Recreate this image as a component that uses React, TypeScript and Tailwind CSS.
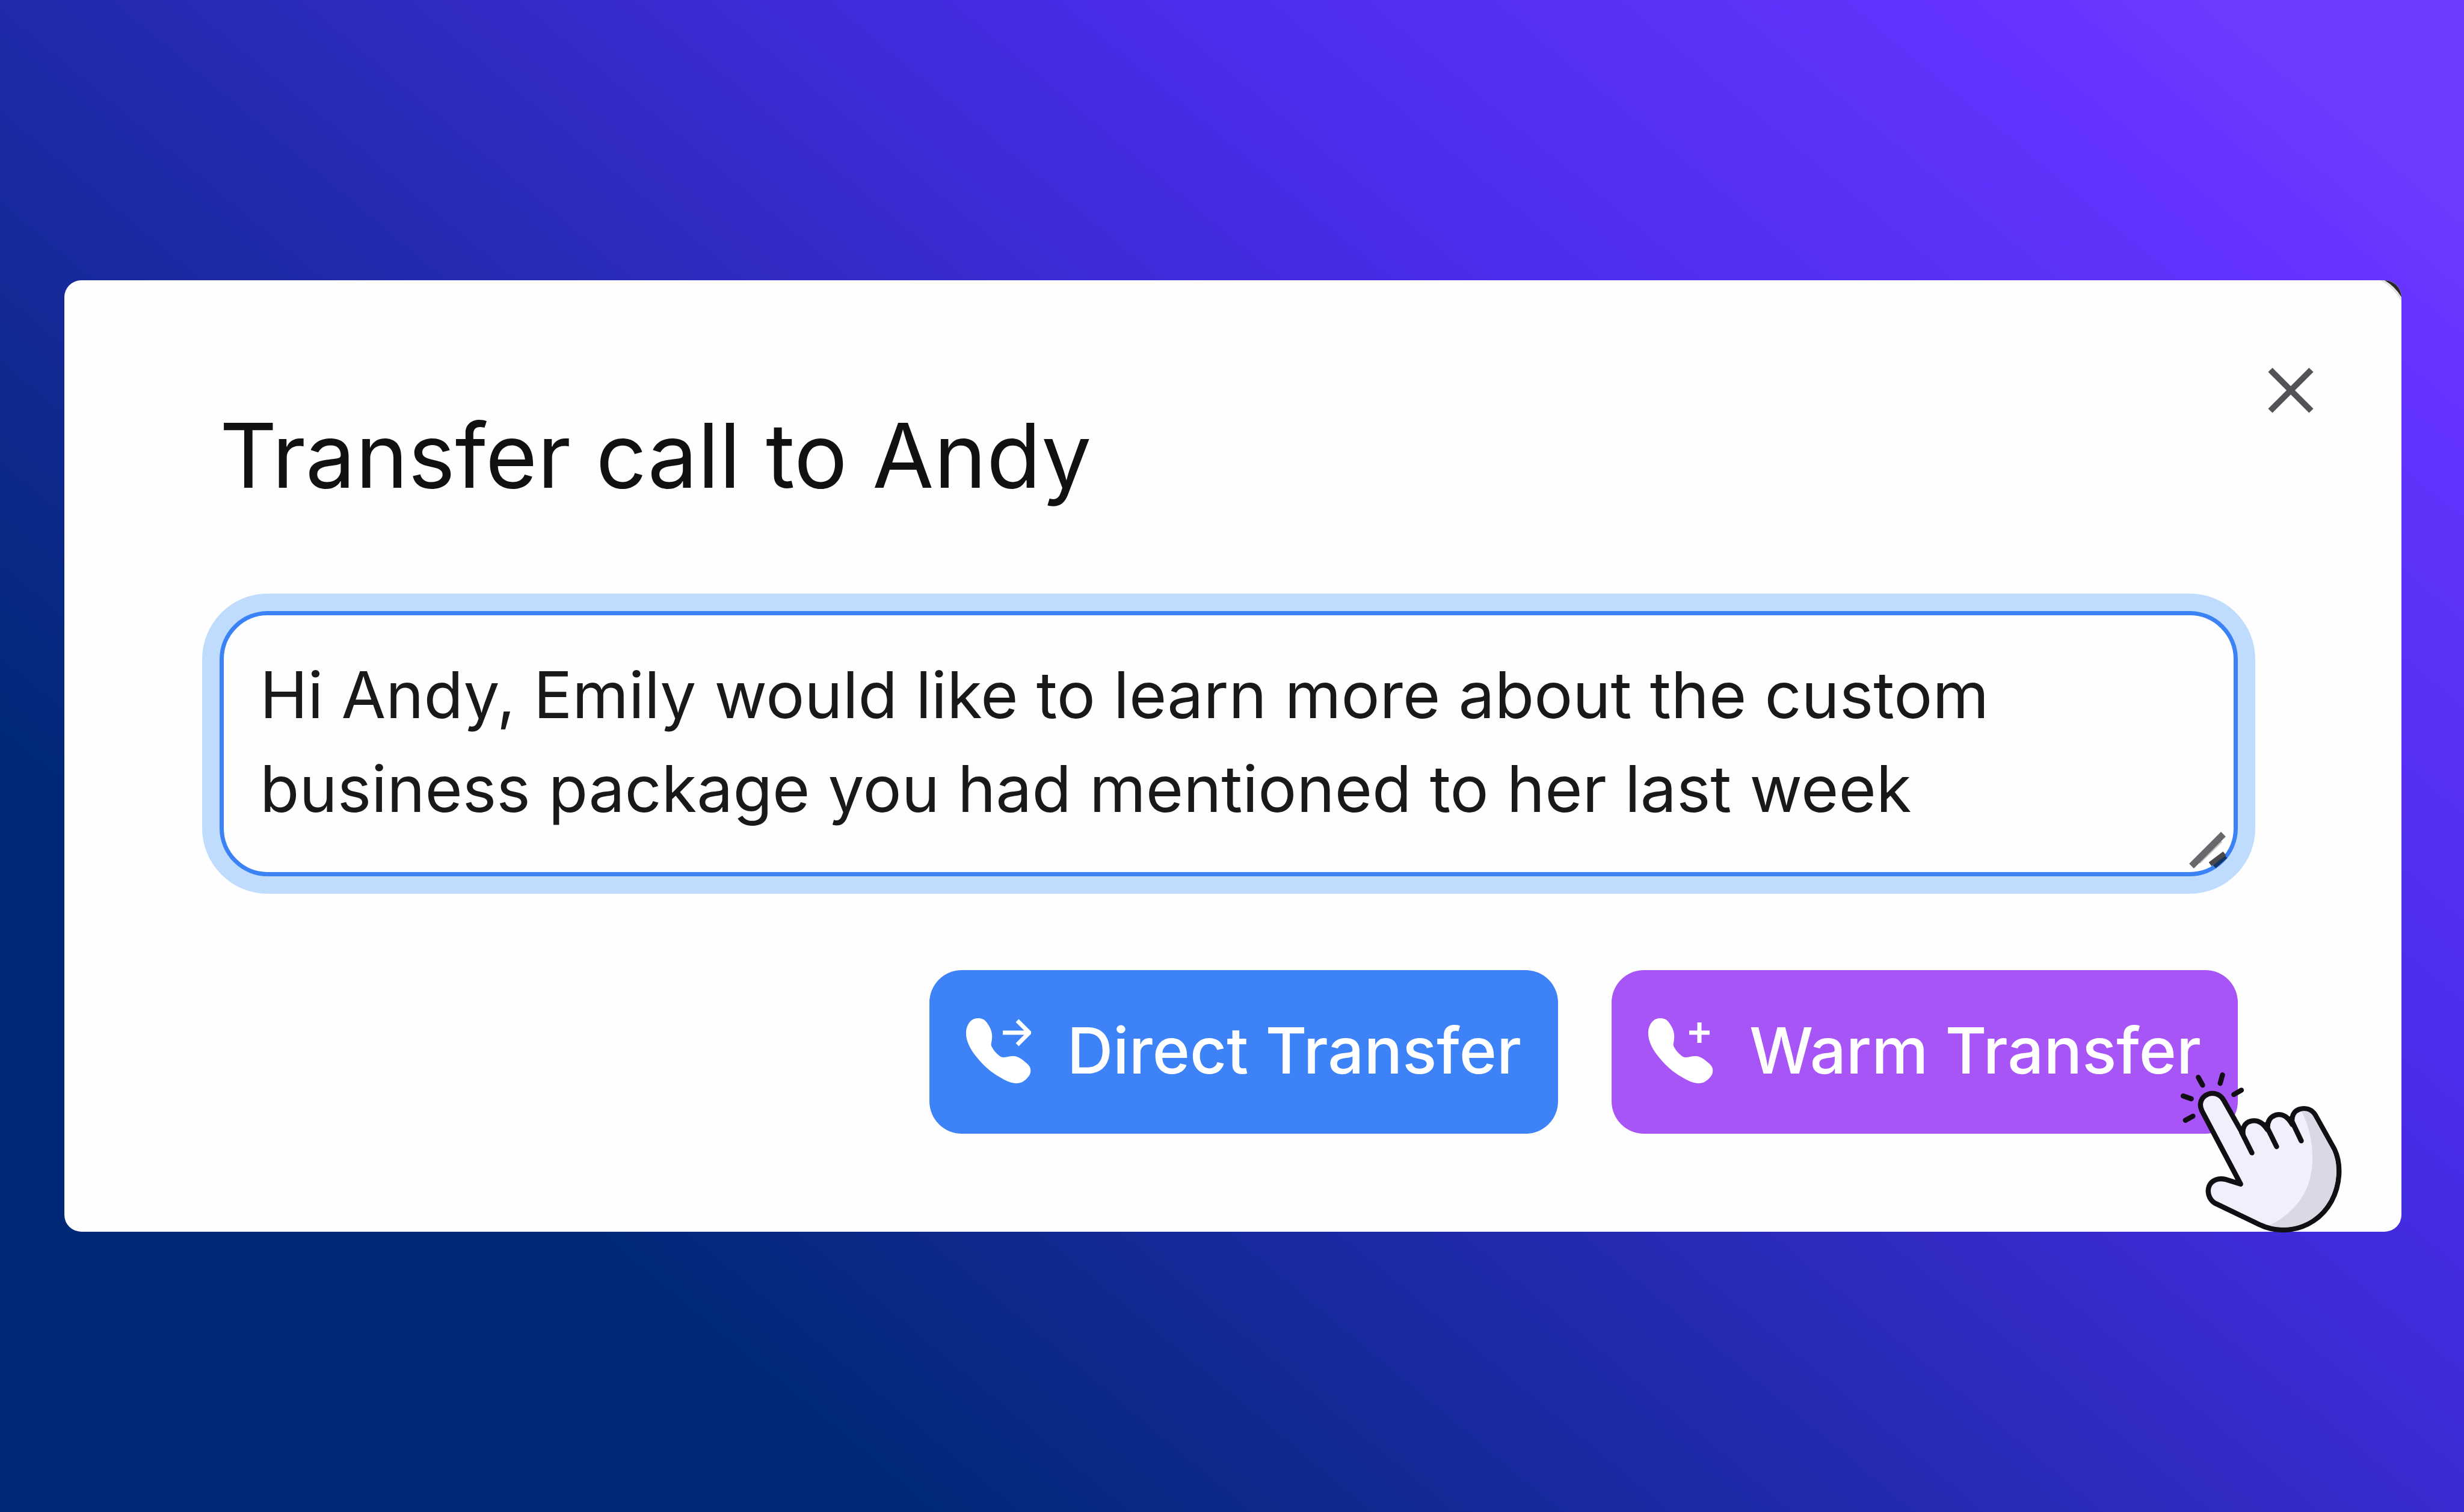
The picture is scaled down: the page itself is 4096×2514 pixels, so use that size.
import React from "react";

function PhoneIcon({ kind }: { kind: "arrow" | "plus" }) {
  return (
    <svg viewBox="0 0 108 109" className="h-[109px] w-[108px] shrink-0" fill="none" aria-hidden="true">
      <path
        d="M20 0C26 0 31 2 35 8C40 15 44 23 43 33C43 40 40 44 43 48C46 54 50 58 56 63C63 68 70 62 80 63C88 64 94 69 102 76C109 82 109 92 102 99C96 106 89 109 81 108C72 107 64 103 56 98C40 89 28 78 17 64C8 53 1 40 0 28C-1 14 6 0 20 0Z"
        fill="white"
      />
      {kind === "arrow" ? (
        <path d="M61 24H104M85 4L105 24L85 44" stroke="white" strokeWidth="7" strokeLinejoin="round" />
      ) : (
        <path d="M68 24H102M85 7V41" stroke="white" strokeWidth="7" />
      )}
    </svg>
  );
}

function ClickHand() {
  return (
    <svg
      viewBox="0 0 1320 1260"
      className="pointer-events-none absolute -right-[205px] -bottom-[178px] h-[312px] w-[326px]"
      fill="none"
      stroke="#110f14"
      strokeWidth="34"
      strokeLinecap="round"
      strokeLinejoin="round"
      aria-hidden="true"
    >
      <path
        d="M509 880L251 392C229 350 236 312 270 285C313 255 370 269 396 317L525 545C519 500 539 468 572 458C620 444 656 462 690 515C686 462 706 428 742 416C790 402 825 424 857 480C848 425 866 390 902 377C947 363 990 377 1014 420L1140 645C1190 750 1177 890 1120 995C1060 1105 950 1176 830 1187C760 1193 690 1180 630 1150L335 1008C294 983 282 930 297 893C315 852 362 838 405 848Z"
        fill="#f2eefb"
      />
      <path
        d="M920 391C955 384 984 396 1000 428L1124 650C1170 750 1160 885 1106 985C1045 1095 945 1160 830 1170C785 1174 740 1168 702 1157C850 1090 960 960 985 800C1005 670 985 520 920 391Z"
        fill="#dad8e4"
        stroke="none"
      />
      <path d="M515 530L585 670M678 480L751 628M846 440L917 589" />
      <path d="M224 161L253 214M387 145L371 202M122 287L177 306M514 248L463 277M188 423L137 451" />
    </svg>
  );
}

export default function App() {
  return (
    <main className="flex min-h-screen items-center bg-[linear-gradient(40deg,#002878_0%,#002878_22%,#4a2ceb_69%,#6634ff_90%,#6e3cff_95%,#6e3cff_100%)] pr-[104px] pl-[107px] font-['Inter',sans-serif]">
      <section
        role="dialog"
        aria-labelledby="title"
        className="relative w-full rounded-[28px] bg-[#fefefe] pt-[212px] pr-[272px] pb-[163px] pl-[258px]"
      >
        <svg viewBox="0 0 40 40" className="pointer-events-none absolute top-0 right-0 size-10" aria-hidden="true">
          <path d="M5 0A90 90 0 0 1 40 35V28A28 28 0 0 0 12 0Z" fill="#e4e3e4" />
          <path d="M12 0A28 28 0 0 1 40 28A80 80 0 0 0 12 0Z" fill="#2a282b" />
        </svg>
        <button type="button" aria-label="Close" className="absolute top-[143px] right-[144px] size-20">
          <svg viewBox="0 0 80 80" className="size-20" stroke="#545256" strokeWidth="10" aria-hidden="true">
            <path d="M6 6L74 74M74 6L6 74" />
          </svg>
        </button>
        <h1 id="title" className="text-[148px] leading-[160px] text-[#111012]">
          Transfer call to Andy
        </h1>
        <div className="relative mt-[178px]">
          <textarea
            aria-labelledby="title"
            className="block h-[441px] w-full resize-none overflow-hidden rounded-[80px] border-[7px] border-[#3b82f6] bg-[#fefefe] px-[60px] py-[54px] text-[107px] leading-[156px] text-[#1a181b] ring-[29px] ring-[#bfdbfe] outline-none"
            defaultValue={"Hi Andy, Emily would like to learn more about the custom business package you had mentioned to her last week"}
          />
          <svg
            viewBox="0 0 80 80"
            className="pointer-events-none absolute right-1 bottom-1 size-20"
            aria-hidden="true"
          >
            <path d="M19 61L56 25" stroke="#c4c3c5" strokeWidth="6" />
            <path d="M7 67L60 14" stroke="#69676b" strokeWidth="11" />
            <path d="M45 68L64 51" stroke="#143564" strokeWidth="7" />
            <path d="M38 64L62 46" stroke="#4a4a4e" strokeWidth="8" />
          </svg>
        </div>
        <div className="mt-[156px] flex justify-end gap-[89px]">
          <button
            type="button"
            className="flex h-[272px] items-center gap-[60px] rounded-[54px] bg-[#3d82f7] px-[61px] pb-1 text-[106px] leading-[156px] font-medium text-white"
          >
            <PhoneIcon kind="arrow" />
            Direct Transfer
          </button>
          <button
            type="button"
            className="relative flex h-[272px] items-center gap-[60px] rounded-[54px] bg-[#a855f7] px-[61px] pb-1 text-[106px] leading-[156px] font-medium text-white"
          >
            <PhoneIcon kind="plus" />
            Warm Transfer
            <ClickHand />
          </button>
        </div>
      </section>
    </main>
  );
}
